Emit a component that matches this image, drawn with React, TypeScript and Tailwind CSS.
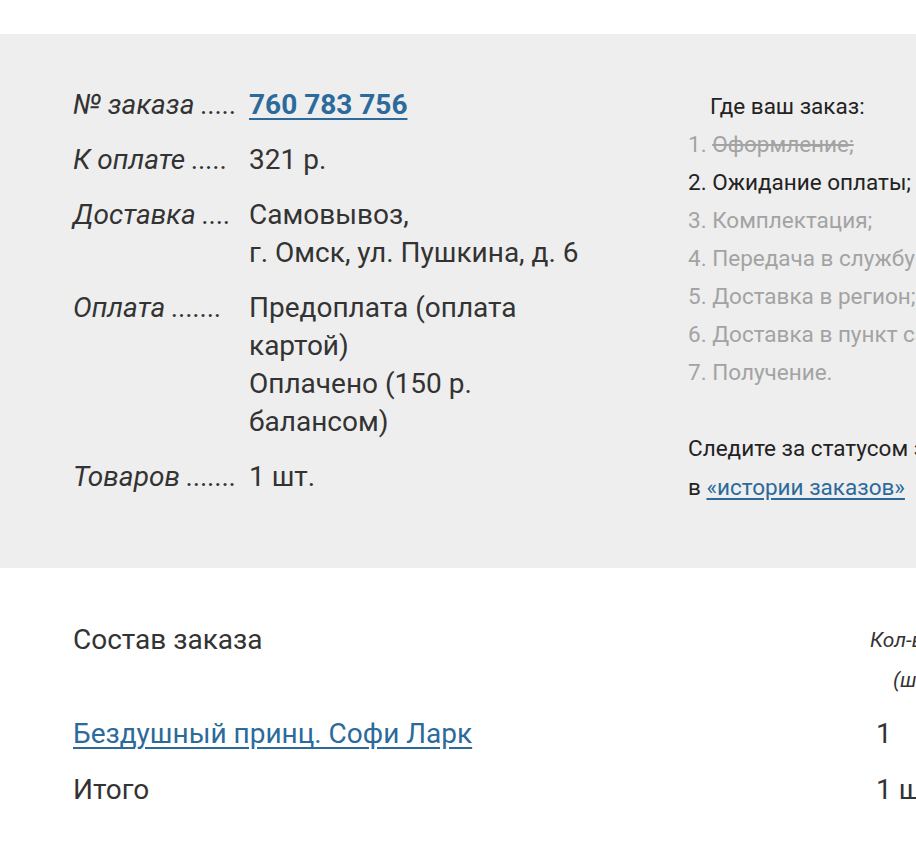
const rows: { label: string; value: React.ReactNode }[] = [
  {
    label: "№ заказа .....",
    value: (
      <a href="#" className="font-bold text-[#2b6a9b] underline decoration-2 underline-offset-[4px]">
        760 783 756
      </a>
    ),
  },
  { label: "К оплате .....", value: "321 р." },
  {
    label: "Доставка ....",
    value: (
      <>
        Самовывоз,
        <br />
        г. Омск, ул. Пушкина, д. 6
      </>
    ),
  },
  {
    label: "Оплата .......",
    value: (
      <>
        Предоплата (оплата картой)
        <br />
        Оплачено (150 р. балансом)
      </>
    ),
  },
  { label: "Товаров .......", value: "1 шт." },
];

const steps = [
  "Оформление;",
  "Ожидание оплаты;",
  "Комплектация;",
  "Передача в службу доставки;",
  "Доставка в регион;",
  "Доставка в пункт самовывоза;",
  "Получение.",
];

const App = () => {
  const current = 1;

  return (
    <div className="w-full min-h-[841px] overflow-hidden bg-white text-[#333] font-['Roboto',sans-serif]">
      <div className="w-[1200px]">
        {/* order info */}
        <div className="mt-[34px] h-[534px] bg-[#eeeeee] pl-[73px] pt-[52px] flex">
          <div className="w-[615px] text-[28px] leading-[38px]">
            {rows.map((r) => (
              <div key={r.label} className="flex mb-[17px]">
                <div className="w-[176px] shrink-0 italic whitespace-nowrap">{r.label}</div>
                <div className="w-[345px]">{r.value}</div>
              </div>
            ))}
          </div>

          <div className="pt-[2px] text-[22.5px]">
            <div className="pl-[22px] leading-[37px] text-[#222]">Где ваш заказ:</div>
            <ol className="leading-[38px] whitespace-nowrap">
              {steps.map((s, i) => (
                <li key={s} className={i === current ? "text-[#222]" : "text-[#a3a3a3]"}>
                  {i + 1}. <span className={i < current ? "line-through" : ""}>{s}</span>
                </li>
              ))}
            </ol>
            <p className="mt-[38px] leading-[39px] text-[#222] whitespace-nowrap">
              Следите за статусом заказа
              <br />
              в{" "}
              <a href="#" className="text-[#2b6a9b] underline underline-offset-[3px]">
                «истории заказов»
              </a>
            </p>
          </div>
        </div>

        {/* order contents */}
        <div className="pl-[73px] pt-[53px]">
          <div className="flex">
            <div className="w-[797px] text-[28px] leading-[38px]">Состав заказа</div>
            <div className="text-[21px] italic leading-[40px] whitespace-nowrap -mt-[1px]">
              <div>Кол-во товаров</div>
              <div className="pl-[23px]">(шт.)</div>
            </div>
          </div>
          <div className="flex mt-[15px] text-[28px] leading-[38px]">
            <div className="w-[803px]">
              <a href="#" className="text-[#2b6a9b] underline underline-offset-[4px]">
                Бездушный принц. Софи Ларк
              </a>
            </div>
            <div>1</div>
          </div>
          <div className="flex mt-[18px] text-[28px] leading-[38px]">
            <div className="w-[803px]">Итого</div>
            <div className="whitespace-nowrap">1 шт.</div>
          </div>
        </div>
      </div>
    </div>
  );
};

export default App;
